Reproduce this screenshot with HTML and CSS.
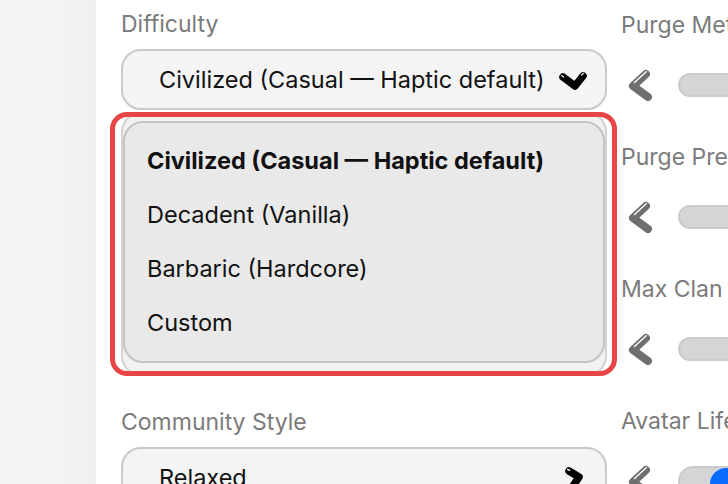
FILE: index.html
```html
<!DOCTYPE html>
<html>
<head>
<meta charset="utf-8">
<link rel="stylesheet" href="styles.css">
</head>
<body>
<div class="app">
  <aside class="sidebar"></aside>
  <main class="main">
    <section class="col-left">
      <div class="field-label">Difficulty</div>
      <div class="select">
        <span class="select-text">Civilized (Casual — Haptic default)</span>
        <svg class="chev-down" width="30" height="22" viewBox="0 0 30 22">
          <polyline points="6,7 18,16 26,6" fill="none" stroke="#000" stroke-width="7.5" stroke-linecap="round" stroke-linejoin="round"/>
          <line x1="4.6" y1="5.6" x2="6.6" y2="7" stroke="#fff" stroke-width="1.2" stroke-linecap="round"/>
          <line x1="24.6" y1="5" x2="26.4" y2="3.4" stroke="#fff" stroke-width="1.2" stroke-linecap="round"/>
        </svg>
      </div>
      <div class="dropdown">
        <div class="list">
          <div class="item selected">Civilized (Casual — Haptic default)</div>
          <div class="item">Decadent (Vanilla)</div>
          <div class="item">Barbaric (Hardcore)</div>
          <div class="item">Custom</div>
        </div>
        <div class="highlight"></div>
      </div>
      <div class="field-label second">Community Style</div>
      <div class="select">
        <span class="select-text">Relaxed</span>
        <svg class="chev-right" width="26" height="30" viewBox="0 0 26 30">
          <polyline points="8,8 18,14 10,26" fill="none" stroke="#000" stroke-width="7.5" stroke-linecap="round" stroke-linejoin="round"/>
          <line x1="6.6" y1="6.4" x2="8.6" y2="7.4" stroke="#fff" stroke-width="1.3" stroke-linecap="round"/>
        </svg>
      </div>
    </section>
    <section class="col-right">
      <div class="setting">
        <div class="field-label">Purge Method</div>
        <div class="control">
          <svg class="chev-left" width="30" height="36" viewBox="0 0 30 36">
            <polyline points="21,7 8,19 23,30" fill="none" stroke="#6f6f6f" stroke-width="8" stroke-linecap="round" stroke-linejoin="round"/>
            <line x1="21.5" y1="4.6" x2="9.5" y2="15.6" stroke="#fff" stroke-width="1.3" stroke-linecap="round"/>
          </svg>
          <div class="track"></div>
        </div>
      </div>
      <div class="setting">
        <div class="field-label">Purge Presets</div>
        <div class="control">
          <svg class="chev-left" width="30" height="36" viewBox="0 0 30 36">
            <polyline points="21,7 8,19 23,30" fill="none" stroke="#6f6f6f" stroke-width="8" stroke-linecap="round" stroke-linejoin="round"/>
            <line x1="21.5" y1="4.6" x2="9.5" y2="15.6" stroke="#fff" stroke-width="1.3" stroke-linecap="round"/>
          </svg>
          <div class="track"></div>
        </div>
      </div>
      <div class="setting">
        <div class="field-label">Max Clan Size</div>
        <div class="control">
          <svg class="chev-left" width="30" height="36" viewBox="0 0 30 36">
            <polyline points="21,7 8,19 23,30" fill="none" stroke="#6f6f6f" stroke-width="8" stroke-linecap="round" stroke-linejoin="round"/>
            <line x1="21.5" y1="4.6" x2="9.5" y2="15.6" stroke="#fff" stroke-width="1.3" stroke-linecap="round"/>
          </svg>
          <div class="track"></div>
        </div>
      </div>
      <div class="setting">
        <div class="field-label">Avatar Lifetime</div>
        <div class="control">
          <svg class="chev-left" width="30" height="36" viewBox="0 0 30 36">
            <polyline points="21,7 8,19 23,30" fill="none" stroke="#6f6f6f" stroke-width="8" stroke-linecap="round" stroke-linejoin="round"/>
            <line x1="21.5" y1="4.6" x2="9.5" y2="15.6" stroke="#fff" stroke-width="1.3" stroke-linecap="round"/>
          </svg>
          <div class="toggle"><span class="knob"></span></div>
        </div>
      </div>
    </section>
  </main>
</div>
</body>
</html>
```
FILE: styles.css
```css
html, body {
  margin: 0;
  padding: 0;
  background: #ffffff;
  overflow: hidden;
}
body {
  font-family: Inter, "Noto Sans", sans-serif;
  width: 728px;
  height: 484px;
}
.app {
  display: flex;
  height: 484px;
}
.sidebar {
  width: 96px;
  flex: none;
  background: linear-gradient(to right, #f4f4f4 0%, #f4f4f4 60%, #f0f0f0 100%);
}
.main {
  flex: none;
  display: flex;
  gap: 14px;
  padding: 10px 0 0 25px;
}
.col-left {
  width: 486px;
  flex: none;
}
.col-right {
  width: 300px;
  flex: none;
  padding-top: 1px;
}
.field-label {
  font-size: 23px;
  line-height: 28px;
  color: #7b7b7b;
  white-space: nowrap;
}
.select {
  margin-top: 11px;
  height: 61px;
  box-sizing: border-box;
  border: 2px solid #c9c9c9;
  border-radius: 20px;
  background: #f4f4f4;
  display: flex;
  align-items: center;
  padding: 0 18px 0 36px;
  gap: 12px;
}
.select-text {
  font-size: 23.5px;
  color: #111;
  white-space: nowrap;
}
.chev-down {
  flex: none;
  margin-top: 2px;
}
.chev-right {
  flex: none;
  margin-left: auto;
  margin-right: 0;
}
.dropdown {
  position: relative;
  height: 266px;
}
.list {
  margin-top: 2px;
  height: 264px;
  box-sizing: border-box;
  border: 2px solid #d2d2d2;
  border-radius: 20px;
  background: #f2f2f2;
  padding-top: 20px;
  position: relative;
}
.list::before {
  content: "";
  position: absolute;
  left: 0;
  right: 0;
  top: 7px;
  height: 242px;
  box-sizing: border-box;
  border: 2px solid #c4c4c4;
  border-radius: 20px;
  background: #e9e9e9;
}
.item {
  position: relative;
  height: 54px;
  line-height: 54px;
  padding-left: 24px;
  font-size: 23.5px;
  color: #111;
  white-space: nowrap;
}
.item.selected {
  font-weight: 700;
}
.highlight {
  position: absolute;
  left: -11px;
  right: -10px;
  top: 0;
  bottom: 2px;
  border: 5px solid #e84646;
  border-radius: 17px;
  pointer-events: none;
}
.field-label.second {
  margin-top: 30px;
}
.setting {
  margin-bottom: 38px;
}
.control {
  display: flex;
  align-items: center;
  gap: 23px;
  height: 40px;
  margin-top: 26px;
  padding-left: 4px;
}
.chev-left {
  flex: none;
}
.track {
  width: 200px;
  height: 24px;
  box-sizing: border-box;
  border-radius: 12px;
  background: #d5d5d5;
  border: 2px solid #cbcbcb;
}
.toggle {
  position: relative;
  width: 70px;
  height: 30px;
  box-sizing: border-box;
  border-radius: 15px;
  background: #d5d5d5;
  border: 2px solid #cbcbcb;
}
.knob {
  position: absolute;
  left: 30px;
  top: 0;
  width: 32px;
  height: 32px;
  border-radius: 50%;
  background: #0a6cff;
}
```
